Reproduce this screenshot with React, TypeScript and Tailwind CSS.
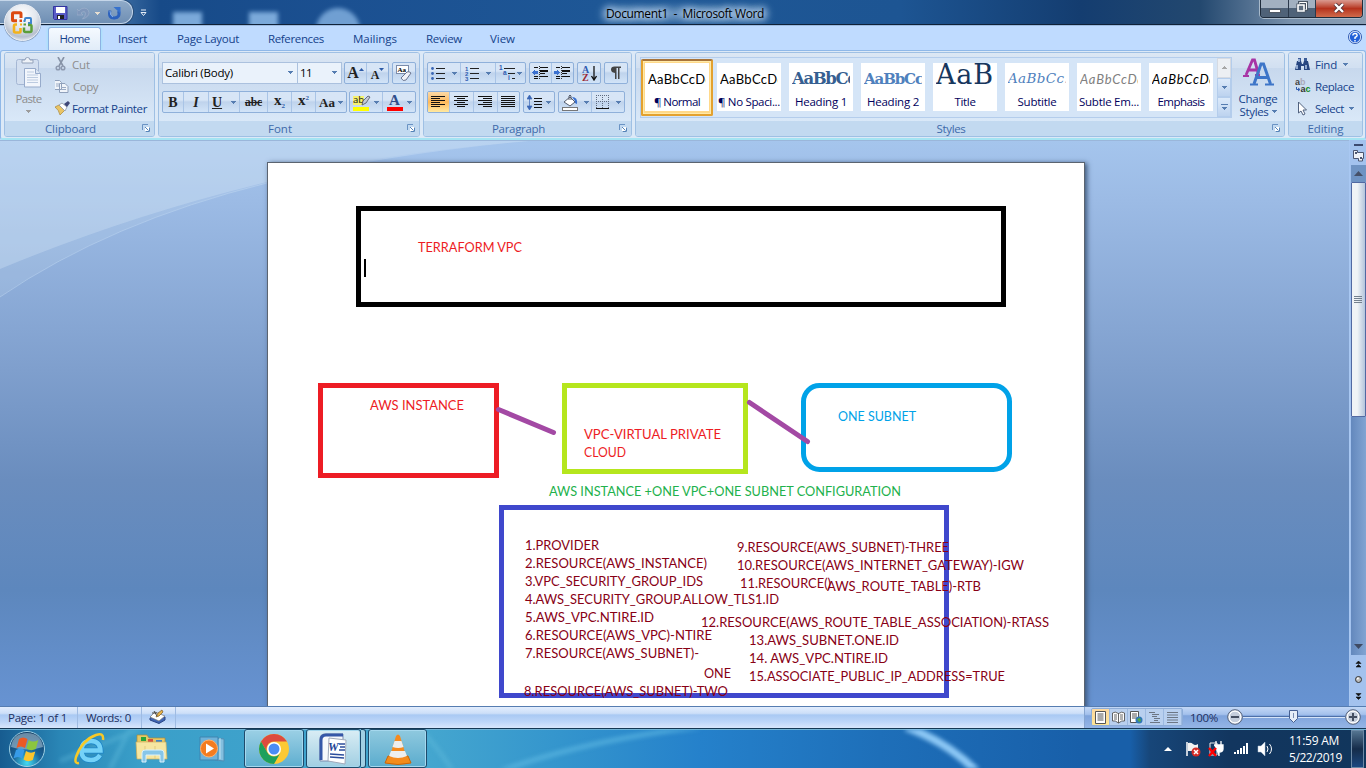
import { useLayoutEffect, useRef } from "react";
import type { ReactNode } from "react";

/* Text label that spreads or tightens its letters to fill a given width. */
function T({ w, children, className = "" }: { w: number; children: string; className?: string }) {
  const ref = useRef<HTMLSpanElement>(null);
  useLayoutEffect(() => {
    const el = ref.current;
    if (!el) return;
    el.style.letterSpacing = "0px";
    const natural = el.getBoundingClientRect().width;
    el.style.letterSpacing = `${(w - natural) / children.length}px`;
  }, [w, children]);
  return (
    <span ref={ref} className={`inline-block shrink-0 whitespace-pre ${className}`}>
      {children}
    </span>
  );
}

function Arrow({ className = "", color = "#567db1" }: { className?: string; color?: string }) {
  return (
    <svg width="5" height="3" viewBox="0 0 5 3" className={`shrink-0 ${className}`} shapeRendering="crispEdges">
      <path d="M0 0h5v1H0zM1 1h3v1H1zM2 2h1v1H2z" fill={color} />
    </svg>
  );
}

function Launcher() {
  return (
    <svg width="8" height="8" viewBox="0 0 8 8" className="shrink-0">
      <path d="M.5 6V.5H6" stroke="#6a93c4" fill="none" />
      <path d="M3 3h5v5H3z" fill="#fff" />
      <path d="M3 3l3.500 3.500M7.500 3.500v4h-4" stroke="#5583b8" fill="none" />
    </svg>
  );
}

function Group({ label, lw, className, launcher = true, children }: { label: string; lw: number; className: string; launcher?: boolean; children: ReactNode }) {
  return (
    <div className={`flex h-[85px] shrink-0 flex-col overflow-hidden rounded-[3px] border border-[#9fc0e4] bg-gradient-to-b from-[#dde9f5] via-[#cddff2] to-[#d0e4f9] shadow-[inset_1px_1px_0_#e9f2fb] ${className}`}>
      <div className="relative h-[68px] bg-gradient-to-b from-[#dce7f4] from-0% via-[#d2e0f1] via-20% to-[#d3e4f6]">
        <div className="absolute inset-x-0 top-[15px] h-[53px] bg-gradient-to-b from-[#c7d8ed] to-[#d9e8f8]" />
        <div className="relative h-full">{children}</div>
      </div>
      <div className="flex h-[15px] items-center justify-center bg-[#c2d9f0] text-[#3e6aaa]">
        <span className="flex flex-1 justify-center"><T w={lw}>{label}</T></span>
        {launcher && <span className="flex w-[18px] items-start justify-end pb-[2px] pr-[4px]"><Launcher /></span>}
      </div>
    </div>
  );
}

function Bar({ className, children }: { className: string; children: ReactNode }) {
  return (
    <div className={`flex h-[22px] shrink-0 divide-x divide-[#a9c4e6] overflow-hidden rounded-[2px] border border-[#8fb0da] bg-gradient-to-b from-[#d7e5f6] from-40% via-[#bfd3ec] via-50% to-[#d2e4f8] ${className}`}>
      {children}
    </div>
  );
}

function Cell({ className, children }: { className: string; children: ReactNode }) {
  return <div className={`flex shrink-0 items-center justify-center gap-[6px] ${className}`}>{children}</div>;
}

function Lines({ rows, color = "#111" }: { rows: [number, number][]; color?: string }) {
  return (
    <svg width="15" height="14" viewBox="0 0 15 14" shapeRendering="crispEdges">
      {rows.map(([x, w], i) => <rect key={i} x={x} y={1 + i * 2} width={w} height="1" fill={color} />)}
    </svg>
  );
}

function OfficeOrb() {
  return (
    <svg width="40" height="42" viewBox="0 0 40 42" className="absolute left-[3px] top-[2px] z-10">
      <defs>
        <radialGradient id="orb" cx=".5" cy=".3" r=".75">
          <stop offset="0" stopColor="#fff" /><stop offset=".5" stopColor="#e3e7ee" /><stop offset=".8" stopColor="#b7c0cf" /><stop offset="1" stopColor="#f6f8fb" />
        </radialGradient>
      </defs>
      <circle cx="19.500" cy="21" r="18.800" fill="#4c6180" opacity=".5" />
      <circle cx="19.500" cy="20.500" r="18" fill="url(#orb)" stroke="#e9eef6" strokeWidth="1" />
      <g fill="none">
        <path d="M14 18.700h-3.500q-1 0-1-1v-6q0-1 1-1h6.500q1 0 1 1v4.300" stroke="#dc4a12" strokeWidth="3" />
        <path d="M22 18.500v-1.500q0-1 1-1h4q1 0 1 1v4h-3" stroke="#3f86cf" strokeWidth="2" />
        <path d="M14 22.500h-1.500q-1.500 0-1.500 1.500v5q0 1.500 1.500 1.500h4q1 0 1-1v-3.500" stroke="#f3b21c" strokeWidth="2.600" />
        <path d="M25 23h2q1.500 0 1.500 1v4.500q0 1.500-1.500 1.500h-4.500q-1.500 0-1.500-1.500v-3" stroke="#5a9e3a" strokeWidth="2.500" />
      </g>
      <path d="M16.500 17.500h2.500v2.500h-2.500z" fill="#dc4a12" /><path d="M20.500 18h2v2h-2z" fill="#3f86cf" /><path d="M17 21.500h2v2h-2z" fill="#f3b21c" /><path d="M20.500 21.500h2.500v2h-2.500z" fill="#5a9e3a" />
    </svg>
  );
}

function TitleBar() {
  return (
    <div className="relative flex h-[26px] items-start overflow-hidden border-b border-[#9dbbe0] bg-[linear-gradient(90deg,#6f93b9_0,#4675a8_110px,#174a88_160px,#1b5091_340px,#1e5796_600px,#1d5593_900px,#143d70_1080px,#23486f_1200px,#7890ab_1290px,#8ba0b6_100%)] text-[12px]">
      <div className="absolute left-[173px] top-[12px] h-[16px] w-[29px] bg-[#94c1ee] opacity-80 blur-[2px]" />
      <div className="absolute left-[249px] top-[12px] h-[16px] w-[29px] bg-[#94c1ee] opacity-80 blur-[2px]" />
      <div className="absolute left-[316px] top-[8px] h-[22px] w-[44px] rounded-t-full bg-[#94c1ee] opacity-70 blur-[2px]" />
      <div className="absolute left-[602px] top-[7px] h-[14px] w-[166px] rounded-full bg-[#a9c9e8] opacity-50 blur-[4px]" />
      <div className="relative flex h-[24px] w-[133px] shrink-0 items-center rounded-r-full border border-l-0 border-[#c5d6e9] bg-gradient-to-b from-[#8faac8] to-[#6f8fb4] pl-[53px] pt-[2px] shadow-[0_0_0_1px_#294d78]">
        <svg width="15" height="14" viewBox="0 0 15 14" className="shrink-0">
          <path d="M.5.500h13.500v13H1.500l-1-1z" fill="#5b5cc8" stroke="#3335a0" /><path d="M3 1h9v6H3z" fill="#fff" /><path d="M4 9h7v4H4z" fill="#222" /><path d="M5 10h2v3H5z" fill="#fff" />
        </svg>
        <svg width="13" height="13" viewBox="0 0 13 13" className="ml-[9px] shrink-0">
          <path d="M0 2v6h6L4 6Q8 3 8.500 6.500 8.500 9.500 5.500 12 12 10 12 5.500 11 0 5 1.500 3.500 2 2 4z" fill="#7f97bb" stroke="#a3b4cd" strokeWidth=".6" />
        </svg>
        <Arrow className="ml-[5px]" color="#e5ddd0" />
        <svg width="14" height="13" viewBox="0 0 14 13" className="ml-[8px] shrink-0">
          <path d="M2 3.500Q0 11.500 6.500 11 12.500 10.500 10.500 4" fill="none" stroke="#2c61bd" strokeWidth="3" /><path d="M5.500 0h7v6.500z" fill="#3671cd" /><path d="M2 4q0 5 3 6" stroke="#84adea" fill="none" />
        </svg>
      </div>
      <svg width="7" height="8" viewBox="0 0 7 8" className="ml-[7px] mt-[9px] shrink-0"><path d="M1 1h5M1 3.500h5L3.500 6.500z" fill="none" stroke="#e5edf6" /></svg>
      <div className="relative ml-[459px] flex h-[25px] items-center pt-[2px] text-black [text-shadow:0_0_6px_#cfe2f6,0_0_8px_#cfe2f6,0_0_10px_#b5d0ee]">
        <T w={158}>Document1  -  Microsoft Word</T>
      </div>
      <div className="ml-auto mr-[3px] flex h-[18px] w-[103px] overflow-hidden rounded-b-[4px] border border-t-0 border-[#1f2c3c] shadow-[0_0_0_1px_#a9bacb]">
        <div className="flex w-[28px] items-end justify-center border-r border-[#2b394b] bg-gradient-to-b from-[#a2b0c0] from-45% to-[#4f6278] to-50% pb-[4px]"><div className="h-[4px] w-[12px] border border-[#515a66] bg-white" /></div>
        <div className="flex w-[27px] items-center justify-center border-r border-[#2b394b] bg-gradient-to-b from-[#a2b0c0] from-45% to-[#4f6278] to-50% pb-[3px]">
          <svg width="12" height="12" viewBox="0 0 12 12"><path d="M3.500 1.500h7v7h-7z" fill="none" stroke="#4b5664" strokeWidth="3" /><path d="M3.500 1.500h7v7h-7z" fill="none" stroke="#fff" /><path d="M2 4h6v6H2z" fill="#5d6d7f" stroke="#4b5664" strokeWidth="3.200" /><path d="M2 4h6v6H2z" fill="#5d6d7f" stroke="#fff" strokeWidth="1.600" /></svg>
        </div>
        <div className="flex flex-1 items-center justify-center bg-gradient-to-b from-[#d99a90] from-0% via-[#b5321d] via-50% to-[#d06a4b] pb-[2px]">
          <svg width="12" height="10" viewBox="0 0 12 10"><path d="M2 1l8 8M10 1L2 9" stroke="#573238" strokeWidth="4" /><path d="M2 1l8 8M10 1L2 9" stroke="#fff" strokeWidth="2.400" /></svg>
        </div>
      </div>
      <div className="absolute inset-x-0 bottom-0 h-px bg-[#0f2138]" />
    </div>
  );
}

const tabs: [string, number, string][] = [
  ["Insert", 29, "ml-[17px]"], ["Page Layout", 62, "ml-[30px]"], ["References", 56, "ml-[29px]"],
  ["Mailings", 44, "ml-[29px]"], ["Review", 36, "ml-[29px]"], ["View", 25, "ml-[28px]"],
];

function Tabs() {
  return (
    <div className="flex h-[24px] items-center bg-[#bfdbff] pl-[48px] pr-[4px] text-[#15428b]">
      <div className="mt-[1px] flex h-[23px] w-[53px] items-center justify-center rounded-t-[3px] border border-b-0 border-[#8db2e3] bg-gradient-to-b from-[#f5faff] to-[#e1ecf8] pb-[2px] shadow-[0_0_3px_#8fe8f5]"><T w={30}>Home</T></div>
      {tabs.map(([t, w, c]) => <span key={t} className={`flex ${c}`}><T w={w}>{t}</T></span>)}
      <svg width="14" height="14" viewBox="0 0 14 14" className="mb-[2px] ml-auto"><circle cx="7" cy="7" r="6.500" fill="#e9f2ff" stroke="#2d58b0" /><circle cx="7" cy="7" r="5.200" fill="#2361d8" /><path d="M4.800 5.500Q5 3.500 7 3.500t2.200 1.800Q9.200 6.500 7 7.500V9M7 10v1.500" fill="none" stroke="#fff" strokeWidth="1.400" /></svg>
    </div>
  );
}

function Clipboard() {
  return (
    <Group label="Clipboard" lw={51} className="w-[151px]">
      <div className="flex h-full">
        <div className="flex w-[48px] flex-col items-center pt-[4px] text-[#8d8d8d]">
          <svg width="28" height="31" viewBox="0 0 28 31" className="mr-px shrink-0">
            <rect x="1.500" y="2.500" width="22" height="25" rx="2" fill="#d3dff0" stroke="#a5b7d4" />
            <path d="M7 5V3h3q0-2.500 2.500-2.500T15 3h3v3H7z" fill="#eef2f8" stroke="#93a2ba" />
            <path d="M9.500 11.500h11l5 5v13.500h-16z" fill="#f2f6fc" stroke="#97abcb" /><path d="M20.500 11.500v5h5" fill="#dbe6f4" stroke="#97abcb" />
            <path d="M12 15h7M12 18h11M12 20.500h11M12 23h11M12 25.500h11" stroke="#bccbe0" />
          </svg>
          <span className="mr-px mt-[3px] flex h-[14px] items-center"><T w={26}>Paste</T></span>
          <Arrow className="mr-px mt-[5px]" color="#9c9c9c" />
        </div>
        <div className="flex flex-col pl-[2px] text-[#8d8d8d]">
          <div className="flex h-[22px] items-center">
            <svg width="17" height="14" viewBox="0 0 17 14"><path d="M3 0l5 9M9 0L4 9" stroke="#8793a7" strokeWidth="1.600" /><circle cx="3" cy="11" r="1.800" fill="none" stroke="#8e9ab0" strokeWidth="1.500" /><circle cx="8" cy="11" r="1.800" fill="none" stroke="#8e9ab0" strokeWidth="1.500" /></svg>
            <T w={18}>Cut</T>
          </div>
          <div className="flex h-[22px] items-center">
            <svg width="18" height="14" viewBox="1 0 18 14"><path d="M.5 1.500h5l2 2v7h-7zM5.500 4.500h5.500l3 3v6H5.500z" fill="#f0f4fa" stroke="#8fa0bb" /><path d="M2 5h3M2 7h3M7 8.500h5M7 10.500h5" stroke="#9cacc5" /></svg>
            <T w={25}>Copy</T>
          </div>
          <div className="flex h-[22px] items-center text-[#15428b]">
            <svg width="17" height="14" viewBox="0 0 17 14"><path d="M0 6l4-2 6 5-5 5Q4 9 0 6z" fill="#e9c466" stroke="#a98738" strokeWidth=".7" /><path d="M4 4l3-2 5 4-2 4z" fill="#fff" stroke="#8a93a5" strokeWidth=".8" /><path d="M9 3l4-3 2 2-3 4z" fill="#3e4778" /></svg>
            <T w={75}>Format Painter</T>
          </div>
        </div>
      </div>
    </Group>
  );
}

const serif = "font-['Liberation_Serif',serif] font-bold text-[#222]";

function FontGroup() {
  return (
    <Group label="Font" lw={24} className="w-[262px]">
      <div className="flex h-full flex-col gap-[7px] px-[3px] pt-[9px]">
        <div className="flex">
          <div className="flex h-[22px] w-[136px] items-center justify-between border border-[#abc1de] bg-[#eaf2fb] px-[2px] pb-[1px] pr-[4px] text-black"><T w={68}>Calibri (Body)</T><Arrow /></div>
          <div className="flex h-[22px] w-[44px] items-center justify-between border border-l-0 border-[#abc1de] bg-[#eaf2fb] pb-[1px] pl-[2px] pr-[4px] text-black"><T w={12}>11</T><Arrow /></div>
          <Bar className="ml-[2px] w-[45px]">
            <Cell className={`w-[22px] ${serif} !gap-0`}><span className="text-[16px] leading-none">A</span><svg width="5" height="12" viewBox="0 0 5 12"><path d="M0 4l2.500-3L5 4z" fill="#2d5ba8" /></svg></Cell>
            <Cell className={`w-[21px] ${serif} !gap-0`}><span className="pt-[3px] text-[12px] leading-none">A</span><svg width="5" height="12" viewBox="0 0 5 12"><path d="M0 1h5L2.500 4z" fill="#2d5ba8" /></svg></Cell>
          </Bar>
          <Bar className="ml-[3px] w-[24px]">
            <Cell className="w-[22px]"><svg width="17" height="17" viewBox="0 0 17 17"><rect x=".5" y=".5" width="12" height="8" fill="#fff" stroke="#7b8cab" /><text x="1.500" y="7" fontSize="7" fontWeight="700" fontFamily="Liberation Serif, serif">Aa</text><path d="M5 13l6-6q2-1 4 1l-5 7q-3 2-5-2z" fill="#f0f2f8" stroke="#69748f" /></svg></Cell>
          </Bar>
        </div>
        <div className="flex">
          <Bar className="w-[185px]">
            <Cell className={`w-[21px] ${serif} text-[14px]`}><span>B</span></Cell>
            <Cell className={`w-[25px] ${serif} text-[14px]`}><i>I</i></Cell>
            <Cell className={`w-[31px] ${serif} !gap-[9px] text-[14px]`}><u>U</u><Arrow /></Cell>
            <Cell className={`w-[28px] ${serif} text-[11.500px]`}><s>abc</s></Cell>
            <Cell className={`w-[24px] ${serif} !gap-0 text-[15px] leading-none`}><span className="pb-[3px]">x</span><span className="pt-[8px] text-[7px] text-[#2d5ba8]">2</span></Cell>
            <Cell className={`w-[24px] ${serif} !gap-0 text-[15px] leading-none`}><span className="pb-[3px]">x</span><span className="pb-[7px] text-[7px] text-[#2d5ba8]">2</span></Cell>
            <Cell className={`w-[30px] ${serif} !gap-[3px] text-[13px]`}><span>Aa</span><Arrow /></Cell>
          </Bar>
          <Bar className="ml-[2px] w-[67px]">
            <Cell className="w-[33px] !gap-[3px]">
              <svg width="18" height="17" viewBox="0 0 18 17"><rect x="0" y="2" width="11" height="9" fill="#f6f16e" /><text x="0" y="9" fontSize="9.500" fontFamily="Open Sans, sans-serif" fill="#111">ab</text><path d="M9 11l1-4 5-5 2 1-4 6z" fill="#c5cbd8" stroke="#4a5264" strokeWidth=".8" /><rect x="0" y="13" width="16" height="4" fill="#ff0" /></svg><Arrow />
            </Cell>
            <Cell className="w-[33px] !gap-[4px]">
              <svg width="16" height="17" viewBox="0 0 16 17"><text x="2" y="11" fontSize="15" fontWeight="700" fontFamily="Liberation Serif, serif" fill="#2f4f8c">A</text><rect x="0" y="13" width="16" height="4" fill="#f00" /></svg><Arrow />
            </Cell>
          </Bar>
        </div>
      </div>
    </Group>
  );
}

function ListIcon({ kind }: { kind: "dots" | "nums" }) {
  return (
    <svg width="15" height="15" viewBox="0 0 15 15">
      <path d="M5 2.500h9M5 7.500h9M5 12.500h9" stroke="#222" />
      {[2.500, 7.500, 12.500].map((y, i) => kind === "dots"
        ? <circle key={y} cx="1.500" cy={y} r="1.400" fill="#3a66b5" />
        : <text key={y} x="0" y={y + 2} fontSize="6" fontWeight="700" fontFamily="Liberation Sans, sans-serif" fill="#2f5bb0">{i + 1}</text>)}
    </svg>
  );
}

function IndentIcon({ flip = false }: { flip?: boolean }) {
  return (
    <svg width="17" height="16" viewBox="0 0 17 16" shapeRendering="crispEdges">
      <path d="M7.500 1v14" stroke="#333" strokeDasharray="1 1" />
      <path d="M2 2.500h4M8 2.500h8M2 11.500h4M8 11.500h8M2 13.500h4M8 8.500h5" stroke="#111" /><path d="M8 5.500h8" stroke="#111" strokeWidth="2" />
      <path d={flip ? "M0 6h3V4l3 3.500L3 11V9H0z" : "M6 6H3V4L0 7.500 3 11V9h3z"} fill="#3a70cf" />
    </svg>
  );
}

function Paragraph() {
  return (
    <Group label="Paragraph" lw={53} className="w-[209px]">
      <div className="flex h-full flex-col gap-[7px] pl-[3px] pt-[9px]">
        <div className="flex">
          <Bar className="w-[99px]">
            <Cell className="w-[33px]"><ListIcon kind="dots" /><Arrow /></Cell>
            <Cell className="w-[35px]"><ListIcon kind="nums" /><Arrow /></Cell>
            <Cell className="w-[29px] !gap-0">
              <svg width="18" height="16" viewBox="0 0 18 16"><g fontSize="6.500" fontWeight="700" fontFamily="Liberation Sans, sans-serif" fill="#2f5bb0"><text x="0" y="5">1</text><text x="4" y="10">a</text><text x="9" y="15">i</text></g><path d="M5 3.500h11M9 8.500h7M13 13.500h3" stroke="#222" /></svg><Arrow />
            </Cell>
          </Bar>
          <Bar className="ml-[3px] w-[45px]"><Cell className="w-[22px]"><IndentIcon /></Cell><Cell className="w-[21px]"><IndentIcon flip /></Cell></Bar>
          <Bar className="ml-[3px] w-[24px]">
            <Cell className="w-[22px]"><svg width="15" height="17" viewBox="0 0 15 17"><text x="0" y="8" fontSize="10" fontWeight="700" fontFamily="Liberation Serif, serif" fill="#2f5bb0">A</text><text x="0" y="16" fontSize="10" fontWeight="700" fontFamily="Liberation Serif, serif" fill="#9c2a35">Z</text><path d="M12 1v13M9.500 11l2.500 4 2.500-4" stroke="#111" strokeWidth="1.300" fill="none" /></svg></Cell>
          </Bar>
          <Bar className="ml-[3px] w-[24px]">
            <Cell className="w-[22px]"><svg width="12" height="14" viewBox="0 0 12 14"><path d="M11 .5H4.500Q1 .5 1 3.500t4 3.500V13h1.500V2H8v11h1.500V2H11z" fill="#444" /></svg></Cell>
          </Bar>
        </div>
        <div className="flex">
          <Bar className="w-[93px]">
            <Cell className="w-[22px] bg-gradient-to-b from-[#fcd9a5] via-[#fdb95a] to-[#ffe9a0]"><Lines rows={[[0, 14], [0, 9], [0, 14], [0, 9], [0, 14], [0, 9]]} /></Cell>
            <Cell className="w-[24px]"><Lines rows={[[0, 14], [3, 8], [0, 14], [3, 8], [0, 14], [3, 8]]} /></Cell>
            <Cell className="w-[24px]"><Lines rows={[[0, 14], [5, 9], [0, 14], [5, 9], [0, 14], [5, 9]]} /></Cell>
            <Cell className="w-[21px]"><Lines rows={[[0, 14], [0, 14], [0, 14], [0, 14], [0, 14], [0, 14]]} /></Cell>
          </Bar>
          <Bar className="ml-[3px] w-[32px]">
            <Cell className="w-[30px] !gap-[3px]"><svg width="16" height="17" viewBox="0 0 16 17"><path d="M2.500 2v13M0 5l2.500-4L5 5zM0 12l2.500 4L5 12z" fill="#3a66b5" stroke="#3a66b5" strokeWidth=".7" /><path d="M7 4.500h8M7 7.500h8M7 10.500h8M7 13.500h8" stroke="#111" /></svg><Arrow /></Cell>
          </Bar>
          <Bar className="ml-[3px] w-[67px]">
            <Cell className="w-[33px] !gap-[5px]"><svg width="17" height="17" viewBox="0 0 17 17"><path d="M2 8l6-5 5 5-5 4z" fill="#fff" stroke="#555c6c" /><path d="M7 6V2q1-2 2 0v4" fill="none" stroke="#555c6c" /><path d="M10 3q6 0 5 7-3-1-2-3z" fill="#3a70cf" /><rect x=".5" y="13.500" width="15" height="3" fill="#fff" stroke="#777" /></svg><Arrow /></Cell>
            <Cell className="w-[33px] !gap-[6px]"><svg width="14" height="15" viewBox="0 0 14 15" shapeRendering="crispEdges"><path d="M.5 0v13M6.500 0v13M12.500 0v13M0 .5h13M0 6.500h13" stroke="#5e6b80" strokeDasharray="1 1" /><path d="M0 13.500h13" stroke="#111" /></svg><Arrow /></Cell>
          </Bar>
        </div>
      </div>
    </Group>
  );
}

const styles: { name: string; nw: number; sample: string; sw: number; cls: string }[] = [
  { name: "¶ Normal", nw: 46, sample: "AaBbCcDd", sw: 65, cls: "font-[Lato] text-[13px] text-black" },
  { name: "¶ No Spaci...", nw: 62, sample: "AaBbCcDd", sw: 65, cls: "font-[Lato] text-[13px] text-black" },
  { name: "Heading 1", nw: 52, sample: "AaBbCc", sw: 64, cls: "font-['DejaVu_Serif','Liberation_Serif',serif] font-bold text-[16.500px] text-[#365f91]" },
  { name: "Heading 2", nw: 52, sample: "AaBbCc", sw: 59, cls: "font-['DejaVu_Serif','Liberation_Serif',serif] font-bold text-[15px] text-[#4f81bd]" },
  { name: "Title", nw: 21, sample: "AaB", sw: 58, cls: "font-['DejaVu_Serif',serif] text-[27px] text-[#17365d]" },
  { name: "Subtitle", nw: 39, sample: "AaBbCc.", sw: 61, cls: "font-['DejaVu_Serif',serif] italic text-[13.500px] text-[#4f81bd]" },
  { name: "Subtle Em...", nw: 60, sample: "AaBbCcDd", sw: 65, cls: "font-[Lato] italic text-[13px] text-[#808080]" },
  { name: "Emphasis", nw: 47, sample: "AaBbCcDd", sw: 65, cls: "font-[Lato] italic text-[13px] text-black" },
];

function Styles() {
  return (
    <Group label="Styles" lw={29} className="w-[650px]">
      <div className="flex h-full pl-[4px] pt-[4px]">
        <div className="flex h-[61px] w-[592px] shrink-0 border border-[#b4cdec] bg-[#d5e5f7]">
          <div className="flex flex-1">
            {styles.map((s, i) => (
              <div key={s.name} className={`flex h-[57px] w-[72px] shrink-0 items-center justify-center ${i === 0 ? "mt-px rounded-[2px] border-2 border-[#e3a12f] border-t-[#a8743a] bg-[#ffd98a] shadow-[inset_0_0_0_1px_#ffe9a8]" : "mt-px"}`}>
                <div className="mb-px flex h-[48px] w-[64px] shrink-0 flex-col overflow-hidden bg-white">
                  <div className={`flex h-[30px] items-center overflow-hidden pt-[2px] ${i === 4 ? "items-end pb-[5px]" : ""} mx-[3px] w-[58px] ${s.cls}`}><T w={s.sw} className="leading-none">{s.sample}</T></div>
                  <div className="flex h-[17px] items-center justify-center text-[11.500px] text-[#00005c]"><T w={s.nw}>{s.name}</T></div>
                </div>
              </div>
            ))}
          </div>
          <div className="flex w-[14px] flex-col">
            <div className="flex flex-1 items-center justify-center border border-[#d5dae2] bg-[#eceff3]"><Arrow className="rotate-180" color="#a7a7a7" /></div>
            <div className="flex flex-1 items-center justify-center border border-[#b4cdec] bg-gradient-to-b from-[#dceafa] to-[#bdd3ef]"><Arrow /></div>
            <div className="flex flex-1 flex-col items-center justify-center gap-[2px] border border-[#b4cdec] bg-gradient-to-b from-[#dceafa] to-[#bdd3ef]"><div className="h-px w-[7px] bg-[#567db1]" /><Arrow /></div>
          </div>
        </div>
        <div className="flex flex-1 flex-col items-center pt-[1px] leading-[12px] text-[#15428b]">
          <svg width="31" height="30" viewBox="0 0 31 30">
            <path d="M3 17L9.500 2h2l4 14M5.500 12h8" fill="none" stroke="#a735a5" strokeWidth="2.800" /><path d="M0 18h6M12 17h5" stroke="#a735a5" strokeWidth="1.800" />
            <path d="M11 26L18 6h2.500l7 20M13 19.500h12" fill="none" stroke="#3d75c8" strokeWidth="3" /><path d="M7 26.500h8M22 26.500h9" stroke="#3d75c8" strokeWidth="2" />
          </svg>
          <span className="mt-[4px] flex h-[13px] items-center"><T w={39}>Change</T></span>
          <span className="flex h-[13px] items-center gap-[3px]"><T w={29}>Styles</T><Arrow /></span>
        </div>
      </div>
    </Group>
  );
}

function Editing() {
  return (
    <Group label="Editing" lw={36} launcher={false} className="w-[75px]">
      <div className="flex flex-col pl-[6px] text-[#15428b]">
        <div className="flex h-[22px] items-center">
          <svg width="20" height="15" viewBox="0 0 20 15"><path d="M3 1h3v4H3zM9 1h3v4H9z" fill="#3b5c98" /><path d="M2 4h4l1 3h1l1-3h4l2 9H9V9H6v4H0z" fill="#26457f" /><path d="M2 8v4M11 8v4M4 2v3" stroke="#c2d6f4" strokeWidth="1.400" /></svg>
          <T w={22}>Find</T><Arrow className="ml-[6px]" />
        </div>
        <div className="flex h-[22px] items-center">
          <svg width="20" height="16" viewBox="0 0 20 16" fontFamily="Liberation Sans, sans-serif" fontWeight="700"><text x="0" y="7" fontSize="9" fill="#444">a</text><text x="5" y="7" fontSize="9" fill="#aab">b</text><text x="5.500" y="14" fontSize="9" fill="#333">a</text><text x="10.500" y="14" fontSize="9" fill="#118a1d">c</text><path d="M1.500 9v2.500h3M3 10l2 1.500L3 13" stroke="#2f5bb0" fill="none" /></svg>
          <T w={39}>Replace</T>
        </div>
        <div className="flex h-[22px] items-center">
          <svg width="20" height="15" viewBox="0 0 20 15"><path d="M3.500 1v11l2.500-2 2 4 2-1-2-4h3.500z" fill="#fff" stroke="#51627f" /></svg>
          <T w={29}>Select</T><Arrow className="ml-[5px]" />
        </div>
      </div>
    </Group>
  );
}

const dark = "#880015";
const notes: [string, number, number, number, string][] = [
  ["TERRAFORM VPC", 418, 252, 104, "#ed1c24"], ["AWS INSTANCE", 370, 410, 94, "#ed1c24"],
  ["VPC-VIRTUAL PRIVATE", 584, 439, 137, "#ed1c24"], ["CLOUD", 584, 457, 42, "#ed1c24"],
  ["ONE SUBNET", 838, 421, 78, "#00a2e8"], ["AWS INSTANCE +ONE VPC+ONE SUBNET CONFIGURATION", 549, 496, 352, "#22b14c"],
  ["1.PROVIDER", 525, 550, 74, dark], ["2.RESOURCE(AWS_INSTANCE)", 525, 568, 182, dark],
  ["3.VPC_SECURITY_GROUP_IDS", 525, 586, 178, dark], ["4.AWS_SECURITY_GROUP.ALLOW_TLS1.ID", 525, 604, 254, dark],
  ["5.AWS_VPC.NTIRE.ID", 525, 622, 129, dark], ["6.RESOURCE(AWS_VPC)-NTIRE", 525, 640, 187, dark],
  ["7.RESOURCE(AWS_SUBNET)-", 525, 658, 174, dark], ["ONE", 704, 678, 27, dark],
  ["8.RESOURCE(AWS_SUBNET)-TWO", 524, 696, 204, dark], ["9.RESOURCE(AWS_SUBNET)-THREE", 737, 552, 212, dark],
  ["10.RESOURCE(AWS_INTERNET_GATEWAY)-IGW", 737, 570, 287, dark], ["11.RESOURCE()", 740, 588, 91, dark],
  ["AWS_ROUTE_TABLE)-RTB", 827, 591, 154, dark], ["12.RESOURCE(AWS_ROUTE_TABLE_ASSOCIATION)-RTASS", 701, 627, 348, dark],
  ["13.AWS_SUBNET.ONE.ID", 749, 645, 150, dark], ["14. AWS_VPC.NTIRE.ID", 749, 663, 139, dark],
  ["15.ASSOCIATE_PUBLIC_IP_ADDRESS=TRUE", 749, 681, 256, dark],
];

function Diagram() {
  return (
    <svg width="816" height="543" viewBox="268 163 816 543" className="block font-[Lato] text-[13px]">
      <g fill="none" strokeWidth="5">
        <rect x="358.500" y="208.500" width="645" height="96" stroke="#000" />
        <rect x="320.500" y="385.500" width="176" height="90" stroke="#ed1c24" />
        <rect x="564.500" y="385.500" width="181" height="86" stroke="#b5e61d" />
        <rect x="803.500" y="385.500" width="206" height="84" rx="16" stroke="#00a2e8" />
        <rect x="501.500" y="507.500" width="445" height="188" stroke="#3f48cc" />
        <path d="M498.500 409.500L553.500 432.500M749.500 402.500L807.500 441.500" stroke="#a349a4" strokeLinecap="round" />
      </g>
      <rect x="364" y="259" width="2" height="18" fill="#000" />
      {notes.map(([t, x, y, w, c]) => <text key={t} x={x} y={y} textLength={w} lengthAdjust="spacingAndGlyphs" fill={c}>{t}</text>)}
    </svg>
  );
}

function ScrollBar() {
  return (
    <div className="flex h-full w-[17px] flex-col items-center border-l border-[#a9c8f2] bg-[#a3c2ee]">
      <div className="mt-[4px] h-[2px] w-[9px] bg-[#3c4a70]" />
      <svg width="13" height="13" viewBox="0 0 13 13" className="mb-[3px] mt-[3px]"><path d="M1.500 1.500h4v2h6v6h-1v2.500h-4v-2.500h-5z" fill="#eef1f7" stroke="#4c5670" /><path d="M3 3h2v2H3zM8 8h2v2H8z" fill="#4c5670" /></svg>
      <div className="flex h-[17px] w-[15px] items-center justify-center bg-[#6f93c3]"><svg width="9" height="5" viewBox="0 0 9 5"><path d="M0 5l4.500-5L9 5z" fill="#465068" /></svg></div>
      <div className="flex h-[235px] w-[15px] items-center justify-center rounded-[1px] border border-[#5269a2] bg-gradient-to-r from-[#f0f3f6] from-40% to-[#b4c5dc]">
        <div className="flex flex-col gap-px"><i className="h-px w-[8px] bg-[#74808e]" /><i className="h-px w-[8px] bg-[#74808e]" /><i className="h-px w-[8px] bg-[#74808e]" /><i className="h-px w-[8px] bg-[#74808e]" /></div>
      </div>
      <div className="flex w-[15px] flex-1 items-end justify-center bg-gradient-to-r from-[#6388bd] to-[#82a4d2] pb-[6px]"><svg width="9" height="5" viewBox="0 0 9 5"><path d="M0 0h9L4.500 5z" fill="#3f4a63" /></svg></div>
      <svg width="9" height="51" viewBox="0 0 9 51" className="shrink-0">
        <path d="M2 8.500L4.500 6 7 8.500zM2 12L4.500 9.500 7 12zM2 38.500h5L4.500 41zM2 42h5L4.500 44.500z" fill="#111" stroke="#111" strokeWidth=".6" />
        <circle cx="4.500" cy="24.500" r="3" fill="#bbb" stroke="#333" /><circle cx="3.800" cy="23.500" r="1" fill="#fff" />
      </svg>
    </div>
  );
}

function Workspace() {
  return (
    <div className="relative flex h-[566px] overflow-hidden bg-[linear-gradient(#a5c5ed_0,#9cbbe5_60px,#7f9fcd_230px,#6a8dbe_340px,#5d87bd_450px,#6793d2_566px)]">
      <svg width="620" height="200" viewBox="0 140 620 200" className="absolute left-0 top-0">
        <path d="M0 140V297Q110 222 267 183L267 180Q400 150 540 140z" fill="#d5e5f5" opacity=".16" />
        <path d="M0 140V269Q130 215 267 182Q400 152 540 140z" fill="#d3e4f6" opacity=".34" />
        <path d="M0 297Q110 222 267 183" fill="none" stroke="#c0d8f2" opacity=".5" />
      </svg>
      <div className="absolute inset-x-0 top-0 h-px bg-[#9ab6da]" />
      <div className="relative ml-[267px] mt-[22px] h-[560px] w-[818px] border border-[#5b6470] bg-white shadow-[2px_1px_5px_#3c5577]"><Diagram /></div>
      <div className="relative ml-auto h-full"><ScrollBar /></div>
    </div>
  );
}

function ViewIcon({ kind }: { kind: number }) {
  return (
    <svg width="13" height="13" viewBox="0 0 13 13">
      {kind === 0 && <path d="M1.500.500h10v12h-10zM3.500 3h6M3.500 5h6M3.500 7h6M3.500 9h6" fill="#fff" stroke="#555" />}
      {kind === 1 && <path d="M.5 2Q3 0 6.500 2.500 10 0 12.500 2v8Q10 9 6.500 12 3 9 .5 10zM6.500 2v10M2 4h3M2 6h3M2 8h3M8 4h3M8 6h3M8 8h3" fill="#fff" stroke="#555" strokeWidth=".9" />}
      {kind === 2 && <><path d="M.5.500h8v11h-8zM2 3h5M2 5h5M2 7h5" fill="#fff" stroke="#555" /><circle cx="9" cy="9" r="3.500" fill="#2e77b7" /><path d="M7 8l3-1 1 3-2 1z" fill="#54a93f" /></>}
      {kind === 3 && <path d="M1 1.500h6M4 3.500h7M4 5.500h5M6 7.500h6M6 9.500h4M2 11.500h10" stroke="#6c7684" />}
      {kind === 4 && <path d="M1 1.500h11M1 4h11M1 6.500h11M1 9h11M1 11.500h11" stroke="#6c7684" />}
    </svg>
  );
}

function StatusBar() {
  return (
    <div className="flex h-[22px] items-center border-t border-[#567db1] bg-[linear-gradient(#e2edfd_0,#cddff8_30%,#a9c9f3_38%,#bcd5f8_70%,#d8e6fb_100%)] text-[#1d2f60]">
      <div className="flex h-full w-[78px] items-center border-r border-[#9fbbe2] pb-px pl-[8px]"><T w={59}>Page: 1 of 1</T></div>
      <div className="flex h-full w-[64px] items-center border-r border-[#9fbbe2] pb-px pl-[8px]"><T w={45}>Words: 0</T></div>
      <div className="flex h-full w-[34px] items-center border-r border-[#9fbbe2] pb-[2px] pl-[7px]">
        <svg width="17" height="15" viewBox="0 0 17 15"><path d="M1 9l5-4 10 3v3l-6 3.500L1 11z" fill="#3e64b5" stroke="#2a4482" /><path d="M1 8l5-5 10 4-6 5z" fill="#fff" stroke="#777" strokeWidth=".7" /><path d="M7 8l2-4 4-3 1 2-4 4z" fill="#e9b54a" stroke="#775422" strokeWidth=".7" /><path d="M3 4h5M5 2l3 5" stroke="#444" /></svg>
      </div>
      <div className="ml-auto flex h-full w-[282px] items-center border-l border-[#86a5d0] bg-[linear-gradient(#c3d8f6_0,#a4c1ec_35%,#7fa4dc_42%,#95b5e6_100%)] pb-px pl-[6px]">
        <div className="flex h-[18px] overflow-hidden rounded-[2px] border border-[#8cacd8] bg-[#b9d0ef]">
          {[0, 1, 2, 3, 4].map((k) => <div key={k} className={`flex w-[18px] items-center justify-center border-r border-[#9cb9e0] ${k === 0 ? "bg-gradient-to-b from-[#fbd8a0] to-[#ffe594]" : ""}`}><ViewIcon kind={k} /></div>)}
        </div>
        <span className="ml-[7px] flex"><T w={28}>100%</T></span>
        <svg width="136" height="18" viewBox="0 0 136 18" className="ml-[8px]">
          <path d="M17 8.500h102" stroke="#4e70a8" /><path d="M17 9.500h102" stroke="#d5e4f8" />
          {[9, 127].map((x) => <g key={x}><circle cx={x} cy="9" r="7.300" fill="#e3e8ef" stroke="#52607a" /><circle cx={x} cy="9" r="5.800" fill="#c5cedc" stroke="#fff" /><path d={`M${x - 4} 9h8`} stroke="#454f61" strokeWidth="2" /></g>)}
          <path d="M127 5v8" stroke="#454f61" strokeWidth="2" />
          <path d="M63.500 2.500h8v8l-4 4-4-4z" fill="#e6edf7" stroke="#455f92" /><path d="M67.500 5v5" stroke="#7a8db0" />
        </svg>
      </div>
    </div>
  );
}

function TaskButton({ className, children }: { className: string; children: ReactNode }) {
  return <div className={`flex h-[39px] shrink-0 items-center justify-center rounded-[3px] border border-[#1e4b6c] shadow-[inset_0_0_0_1px_#a5d8ee] ${className}`}>{children}</div>;
}

function TaskBar() {
  return (
    <div className="relative flex h-[40px] items-center overflow-hidden border-t border-[#153754] bg-[linear-gradient(90deg,#175c90_0,#2a86b6_60px,#3a9fc9_140px,#44a6cf_430px,#3495cd_560px,#2581cb_700px,#1e6fb9_880px,#185fa9_1080px,#185fa9_1130px,#174679_1150px,#12365f_1230px,#11365c_100%)] shadow-[inset_0_1px_0_#72b4d6]">
      <svg width="1100" height="40" viewBox="0 0 1100 40" className="absolute left-0 top-0 blur-[2px]">
        <path d="M906 -2Q950 14 980 46" fill="none" stroke="#8ec9f6" strokeWidth="8" /><path d="M500 42Q590 10 700 -2" fill="none" stroke="#62bce5" strokeWidth="5" opacity=".6" />
        <path d="M425 5Q440 22 453 42M60 32l80-32M110 40L130 0" fill="none" stroke="#66bede" strokeWidth="4" opacity=".45" />
      </svg>
      <svg width="38" height="38" viewBox="0 0 38 38" className="relative ml-[8px] shrink-0">
        <defs><radialGradient id="start" cx=".5" cy=".9" r=".9"><stop offset="0" stopColor="#44dbf2" /><stop offset=".45" stopColor="#1a6499" /><stop offset="1" stopColor="#113a61" /></radialGradient></defs>
        <circle cx="19" cy="19" r="17.500" fill="url(#start)" stroke="#9ed1e6" /><path d="M3 17Q5 3 19 3t16 14Q19 22 3 17z" fill="#d6e9f2" opacity=".45" />
        <path d="M11 9q4-3 8.500 0l-2.500 9q-4-3-8.500 0z" fill="#ec5a24" /><path d="M20.800 10q4 3 9.500 0l-2.500 9q-5 2.500-9.500-.5z" fill="#8bc63e" /><path d="M8 20q4.500-3 8.500 0l-2.500 8.500q-4-3-8.500 0z" fill="#379be8" /><path d="M18 21q4.500 3 9.300.500l-2.500 8.500q-5 2.500-9.300-.5z" fill="#fdc52c" />
      </svg>
      <svg width="34" height="34" viewBox="0 0 34 34" className="relative ml-[27px] shrink-0">
        <path d="M9 18.500h18.500Q27 9 18 9 9 9 8.500 18 8 28 18 28q6 0 9-5" fill="none" stroke="#1c86c9" strokeWidth="6" />
        <path d="M9 18.500h18.500Q27 9 18 9 9 9 8.500 18 8 28 18 28q6 0 9-5" fill="none" stroke="#74d2f8" strokeWidth="4.400" />
        <path d="M6 31Q1 32 3 25 9 8 23 3q8-3 7 5" fill="none" stroke="#f7c927" strokeWidth="2.500" />
      </svg>
      <svg width="34" height="30" viewBox="0 0 34 30" className="relative ml-[28px] shrink-0">
        <path d="M2 5V1h10l2 3h16v20H2z" fill="#e5c968" stroke="#a98b39" strokeWidth=".7" /><path d="M6 3h5v4H6z" fill="#27a43b" /><path d="M13 5h5v4h-5z" fill="#d8523d" /><path d="M21 6h6v4h-6z" fill="#3b84cb" /><path d="M1 8h30l1 17H2z" fill="#f6e6a1" stroke="#cdb05e" strokeWidth=".7" /><path d="M10 12v13M20 12v13" stroke="#e1cb7c" /><path d="M7 27v-8q0-3 3-3h16q3 0 3 3v9h-4v-7H11v7H7z" fill="#87c6e8" stroke="#d9f1fb" />
      </svg>
      <svg width="30" height="28" viewBox="0 0 30 28" className="relative ml-[30px] shrink-0">
        <path d="M16 3l9 1v22l-9-1z" fill="#83bfdf" stroke="#4f8eb4" /><path d="M1 2h18v23H1z" fill="#6fb2da" stroke="#3f85b0" /><path d="M21 3v21" stroke="#c0e2f2" /><circle cx="10" cy="13.500" r="8.500" fill="#f47c20" stroke="#ffb16d" /><path d="M7 8.500l8 5-8 5z" fill="#fff" />
      </svg>
      <div className="relative ml-[15px] flex items-center">
        <TaskButton className="w-[60px] bg-gradient-to-b from-[#9bd0e5] to-[#5daecf]">
          <svg width="32" height="32" viewBox="0 0 32 32"><circle cx="16" cy="16" r="15" fill="#fcc934" /><path d="M3.010 8.500A15 15 0 0 1 28.990 8.500H16A7.500 7.500 0 0 0 9.500 19.750z" fill="#dd4b3e" /><path d="M3.010 8.500A15 15 0 0 0 16 31l6.500-11.250A7.500 7.500 0 0 1 9.500 19.750z" fill="#1da05c" /><circle cx="16" cy="16" r="7" fill="#fff" /><circle cx="16" cy="16" r="5.500" fill="#4b8cf5" /></svg>
        </TaskButton>
        <TaskButton className="ml-[2px] w-[55px] bg-gradient-to-b from-[#d9edf5] to-[#a1cfe2]">
          <svg width="34" height="32" viewBox="0 0 34 32"><path d="M3 6Q3 1 8 1h18v27H3z" fill="#f6f8fc" stroke="#7c8bad" /><path d="M4 27V7q0-5 5-5h17" fill="none" stroke="#3557a8" strokeWidth="3" /><path d="M12 5l17 2-1 24-17-3z" fill="#fff" stroke="#a0a9ba" /><path d="M22 11h6M23 14h5M22 17h6M13 21l14 1M13 24l14 1" stroke="#2c4d9c" strokeWidth="1.500" /><text x="11" y="18" fontSize="12" fontStyle="italic" fontWeight="700" fontFamily="Liberation Serif, serif" fill="#234496">W</text></svg>
        </TaskButton>
        <div className="h-[39px] w-[5px] rounded-r-[3px] border border-l-0 border-[#1e4b6c] bg-[#a1d0e4]" />
        <TaskButton className="ml-[2px] w-[59px] bg-gradient-to-b from-[#8fc9df] to-[#5aaccd]">
          <svg width="28" height="32" viewBox="0 0 28 32"><path d="M4 23h20l3 7q-13 3-26 0z" fill="#f28c1b" stroke="#c9660a" /><path d="M12 3q2-3 4 0l7 23q-9 4-18 0z" fill="#f58a1e" /><path d="M10.500 8h7l2 6q-5 2-11 0zM7 18h14l2 5q-9 4-18 0z" fill="#eee" /></svg>
        </TaskButton>
      </div>
      <div className="relative ml-auto flex h-full items-center text-white">
        <svg width="110" height="20" viewBox="0 0 110 20">
          <path d="M1 12l4-4 4 4z" fill="#fff" /><path d="M24 3v14" stroke="#fff" strokeWidth="1.500" /><path d="M25 4q3-1 5 1t5 0v7H25z" fill="#f2f2f2" /><circle cx="33" cy="13" r="4.500" fill="#d52b25" /><path d="M31 11l4 4M35 11l-4 4" stroke="#fff" strokeWidth="1.500" />
          <path d="M47 4h7v12h-7z" fill="none" stroke="#eee" /><path d="M51 6h9v4q0 3-4 3v4M53 6V2M58 6V2" fill="#fff" stroke="#fff" strokeWidth="1.300" /><path d="M46 9l7 8M53 9l-7 8" stroke="#f00" strokeWidth="2.400" />
          <path d="M71 15v-2h2v2zM74 15v-4h2v4zM77 15V9h2v6zM80 15V7h2v8zM83 15V4h2v11z" fill="#fff" /><path d="M95 7h3l4-4v14l-4-4h-3z" fill="#fff" stroke="#b3c5d8" strokeWidth=".5" /><path d="M104 7q2 3 0 6M106.500 5q4 5 0 10" fill="none" stroke="#fff" />
        </svg>
        <div className="ml-[16px] flex w-[62px] flex-col text-[12px] leading-[17px]"><span className="flex"><T w={50}>11:59 AM</T></span><span className="flex"><T w={53}>5/22/2019</T></span></div>
        <div className="mr-[2px] h-[38px] w-[13px] border border-[#6c89a6] bg-gradient-to-b from-[#557591] from-0% via-[#152c4a] via-50% to-[#1b4880]" />
      </div>
    </div>
  );
}

export default function App() {
  return (
    <div className="relative flex h-[768px] w-[1366px] flex-col overflow-hidden bg-[#bfdbff] font-['Open_Sans','Noto_Sans',sans-serif] text-[11.500px] leading-[15px]">
      <TitleBar />
      <OfficeOrb />
      <Tabs />
      <div className="flex h-[90px] shrink-0 gap-[3px] rounded-[3px] border border-b-2 border-[#8fb8e8] border-b-[#a5e4f2] bg-[#dce9f7] pl-[3px] pt-[1px]">
        <Clipboard /><FontGroup /><Paragraph /><Styles /><Editing />
      </div>
      <Workspace />
      <StatusBar />
      <TaskBar />
    </div>
  );
}
